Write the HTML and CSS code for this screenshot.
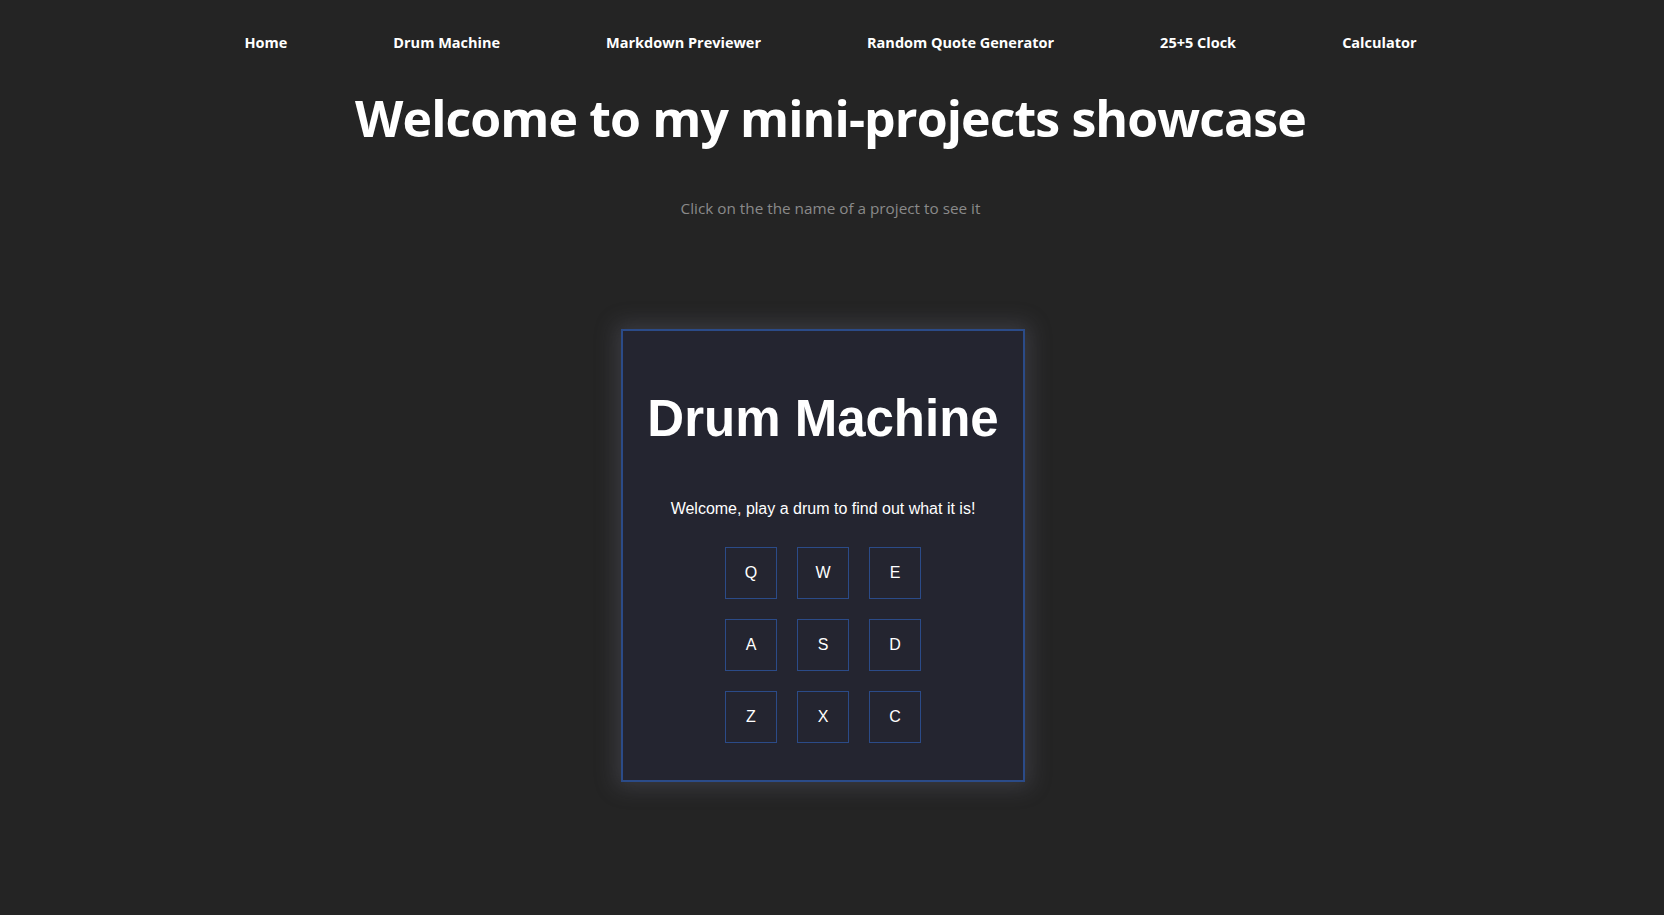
FILE: index.html
```html
<!DOCTYPE html>
<html lang="en">
<head>
<meta charset="utf-8">
<title>Mini-projects showcase</title>
<link rel="stylesheet" href="styles.css">
</head>
<body>
<nav class="nav">
  <a class="nav-link" href="#">Home</a>
  <a class="nav-link" href="#">Drum Machine</a>
  <a class="nav-link" href="#">Markdown Previewer</a>
  <a class="nav-link" href="#">Random Quote Generator</a>
  <a class="nav-link" href="#">25+5 Clock</a>
  <a class="nav-link" href="#">Calculator</a>
</nav>
<h1 class="title">Welcome to my mini-projects showcase</h1>
<p class="subtitle">Click on the the name of a project to see it</p>
<div class="stage">
  <main class="card">
    <h2 class="card-title">Drum Machine</h2>
    <p class="card-text">Welcome, play a drum to find out what it is!</p>
    <div class="pads">
      <button class="pad">Q</button>
      <button class="pad">W</button>
      <button class="pad">E</button>
      <button class="pad">A</button>
      <button class="pad">S</button>
      <button class="pad">D</button>
      <button class="pad">Z</button>
      <button class="pad">X</button>
      <button class="pad">C</button>
    </div>
  </main>
</div>
</body>
</html>
```
FILE: styles.css
```css
* { box-sizing: border-box; }
html, body { margin: 0; padding: 0; }
body {
  background: #242424;
  color: #ffffff;
  font-family: "Open Sans", "Noto Sans", sans-serif;
  min-height: 915px;
  padding-right: 3px;
}
.nav {
  display: flex;
  justify-content: center;
  gap: 106px;
  padding-top: 33px;
}
.nav-link {
  color: #ffffff;
  text-decoration: none;
  font-weight: 700;
  font-size: 14.5px;
  line-height: 20px;
}
.title {
  margin: 33px 0 0;
  text-align: center;
  font-size: 50px;
  line-height: 64px;
  letter-spacing: -0.9px;
  font-weight: 700;
}
.subtitle {
  margin: 48px 0 0;
  text-align: center;
  color: #8a8a8a;
  font-size: 15.3px;
  line-height: 20px;
}
.stage {
  display: flex;
  justify-content: center;
  padding-right: 15px;
  margin-top: 111px;
}
.card {
  width: 404px;
  border: 2px solid #2b4b88;
  background: #242530;
  box-shadow: 0 0 20px 5px rgba(120, 120, 140, 0.28);
  padding: 61px 0 37px;
  font-family: "Liberation Sans", Arial, sans-serif;
  text-align: center;
}
.card-title {
  margin: 0;
  font-size: 51px;
  line-height: 54px;
  font-weight: 700;
}
.card-text {
  margin: 53px 0 0;
  font-size: 16px;
  line-height: 20px;
}
.pads {
  display: grid;
  grid-template-columns: repeat(3, 52px);
  grid-auto-rows: 52px;
  gap: 20px;
  justify-content: center;
  margin-top: 28px;
}
.pad {
  display: flex;
  align-items: center;
  justify-content: center;
  background: transparent;
  border: 1px solid #2b4b88;
  color: #ffffff;
  font-family: "Liberation Sans", Arial, sans-serif;
  font-size: 16px;
  padding: 0;
}
```
